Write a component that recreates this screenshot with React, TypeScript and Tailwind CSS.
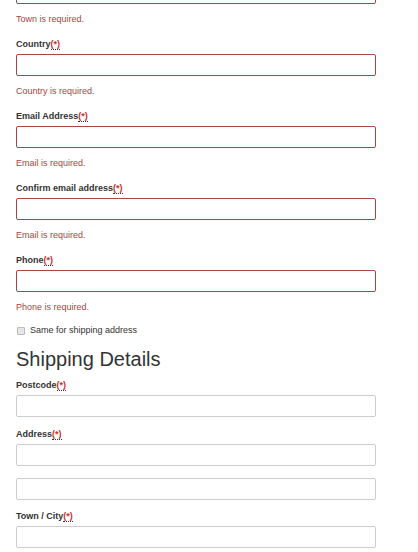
type Field = { label: string; error?: string };

const billing: Field[] = [
  { label: "Country", error: "Country is required." },
  { label: "Email Address", error: "Email is required." },
  { label: "Confirm email address", error: "Email is required." },
  { label: "Phone", error: "Phone is required." },
];

function Label({ text }: { text: string }) {
  return (
    <label className="block text-[9px] leading-[13px] font-bold text-[#333] mb-[3px]">
      {text}
      <abbr
        title="required"
        className="text-[#c9302c] no-underline border-b border-dotted border-[#333]"
      >
        (*)
      </abbr>
    </label>
  );
}

function Input({ error }: { error?: boolean }) {
  return (
    <input
      type="text"
      className={
        "block w-full h-[22px] rounded-[2px] border bg-white outline-none " +
        (error ? "border-[#a94442]" : "border-[#ccc]")
      }
    />
  );
}

function ErrorText({ text }: { text: string }) {
  return (
    <p className="text-[9px] leading-[13px] text-[#a94442] mt-[9px] mb-[12px]">
      {text}
    </p>
  );
}

export default function App() {
  return (
    <main
      className="min-h-screen bg-white text-[#333] overflow-hidden"
      style={{ fontFamily: '"Liberation Sans", Arial, sans-serif' }}
    >
      <div className="ml-4 w-[360px]">
        <div className="-mt-[18px]">
          <Input error />
        </div>
        <ErrorText text="Town is required." />

        {billing.map((f) => (
          <div key={f.label}>
            <Label text={f.label} />
            <Input error />
            <ErrorText text={f.error!} />
          </div>
        ))}

        <div className="flex items-center gap-[5px] -mt-[2px] pl-[1px]">
          <span className="w-[8px] h-[8px] rounded-[1px] border border-[#bbb] bg-[#e6e6e6]" />
          <span className="text-[9px] leading-[13px] text-[#333]">
            Same for shipping address
          </span>
        </div>

        <h2 className="text-[20px] leading-[22px] font-normal text-[#333] mt-[11px] mb-[9px]">
          Shipping Details
        </h2>

        <Label text="Postcode" />
        <Input />

        <div className="mt-[11px]">
          <Label text="Address" />
          <Input />
          <div className="mt-[12px]">
            <Input />
          </div>
        </div>

        <div className="mt-[10px]">
          <Label text="Town / City" />
          <Input />
        </div>
      </div>
    </main>
  );
}
